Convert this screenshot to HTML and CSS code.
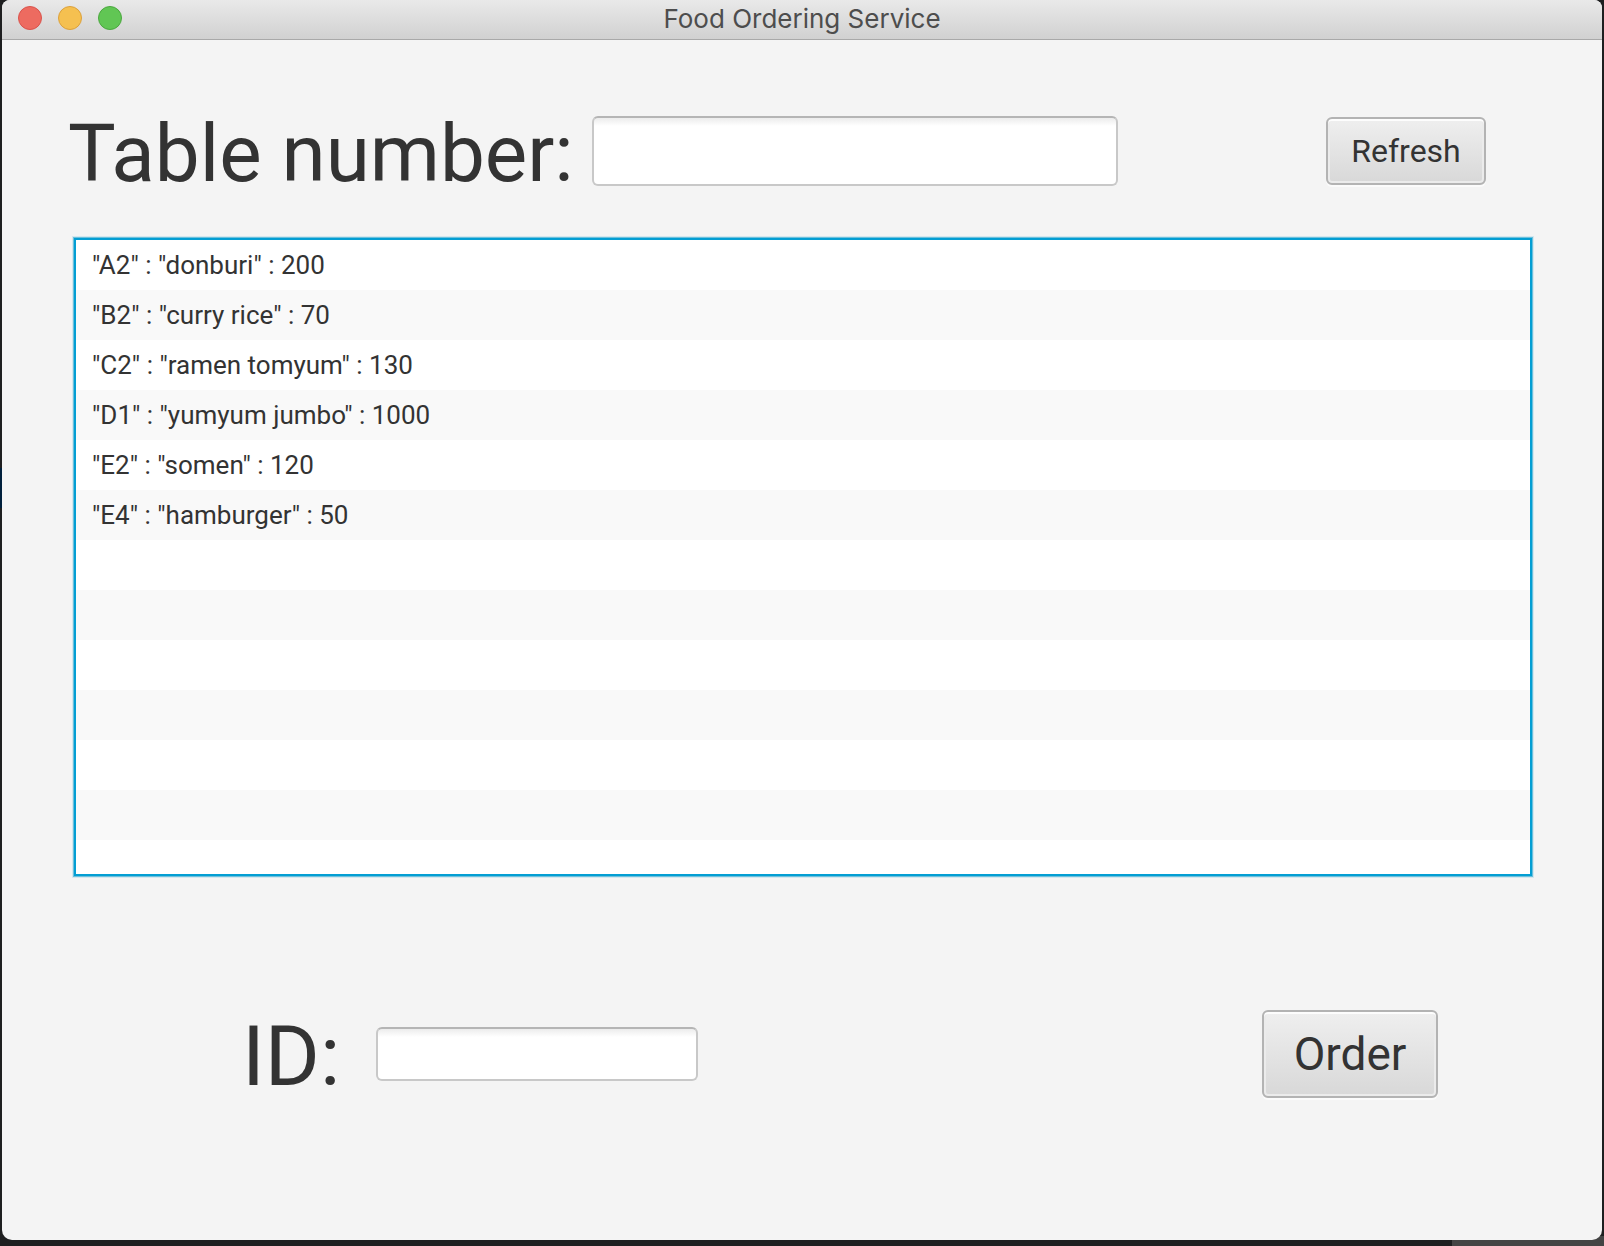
FILE: index.html
```html
<!DOCTYPE html>
<html lang="en">
<head>
<meta charset="utf-8">
<title>Food Ordering Service</title>
<link rel="stylesheet" href="styles.css">
</head>
<body>
<div class="window">
  <header class="titlebar">
    <div class="lights">
      <button class="light light-close" type="button" aria-label="Close"></button>
      <button class="light light-minimize" type="button" aria-label="Minimize"></button>
      <button class="light light-zoom" type="button" aria-label="Zoom"></button>
    </div>
    <h1 class="title">Food Ordering Service</h1>
  </header>
  <main class="content">
    <div class="row row-table">
      <label class="label" for="table-number">Table number:</label>
      <input class="field field-large" id="table-number" type="text">
      <button class="button button-refresh" type="button">Refresh</button>
    </div>
    <ul class="menu" tabindex="0">
      <li class="item">"A2" : "donburi" : 200</li>
      <li class="item">"B2" : "curry rice" : 70</li>
      <li class="item">"C2" : "ramen tomyum" : 130</li>
      <li class="item">"D1" : "yumyum jumbo" : 1000</li>
      <li class="item">"E2" : "somen" : 120</li>
      <li class="item">"E4" : "hamburger" : 50</li>
    </ul>
    <div class="row row-order">
      <label class="label label-id" for="item-id">ID:</label>
      <input class="field" id="item-id" type="text">
      <button class="button button-order" type="button">Order</button>
    </div>
  </main>
</div>
</body>
</html>
```
FILE: styles.css
```css
* {
  box-sizing: border-box;
}

/* desktop visible around the window edges */
body {
  margin: 0;
  min-height: 100vh;
  padding: 0 2px 6px;
  display: flex;
  background:
    linear-gradient(#444, #444) right bottom / 152px 10px no-repeat,
    linear-gradient(#00203c, #00203c) 0 468px / 2px 40px no-repeat,
    #1e1f20;
  color: #333;
  font-family: Roboto, "Liberation Sans", sans-serif;
}

.window {
  flex: 1;
  display: flex;
  flex-direction: column;
  overflow: hidden;
  border-radius: 8px 8px 10px 10px;
  background: #f4f4f4;
}

.titlebar {
  display: grid;
  grid-template-columns: 1fr auto 1fr;
  align-items: center;
  height: 40px;
  padding: 0 16px 3px;
  border-bottom: 1px solid #a9a9a9;
  background: linear-gradient(#e9e9e9, #d1d1d1);
}

.lights {
  display: flex;
  gap: 16px;
}

.light {
  width: 24px;
  height: 24px;
  padding: 0;
  border: 1px solid;
  border-radius: 50%;
}

.light-close {
  border-color: #d9534c;
  background: #ed6b60;
}

.light-minimize {
  border-color: #dba03c;
  background: #f5c050;
}

.light-zoom {
  border-color: #4ba73f;
  background: #61c654;
}

.title {
  margin: 0;
  padding-top: 2px;
  color: #4d4d4d;
  font-family: Inter, "Liberation Sans", sans-serif;
  font-size: 26px;
  font-weight: 400;
  line-height: 32px;
}

.content {
  flex: 1;
  display: flex;
  flex-direction: column;
  padding: 64px 0 139px;
}

.row {
  display: grid;
  align-items: center;
  height: 94px;
}

.row-table {
  grid-template-columns: 524px minmax(0, 526fr) 208fr 160px;
  padding: 0 116px 0 66px;
}

.row-order {
  grid-template-columns: 134px minmax(0, 322fr) 564fr 176px;
  padding: 0 164px 0 240px;
}

.label {
  padding-top: 6px;
  font-size: 80px;
  line-height: 88px;
  white-space: nowrap;
}

.label-id {
  font-size: 84px;
}

.field {
  width: 100%;
  height: 54px;
  padding: 0 14px;
  border: 2px solid #c8c8c8;
  border-top-color: #b5b5b5;
  border-radius: 6px;
  outline: none;
  background: linear-gradient(#ececec, #fff 8px);
  color: inherit;
  font: inherit;
  font-size: 26px;
}

.field-large {
  height: 70px;
}

.button {
  grid-column: 4;
  padding: 0;
  border: 2px solid #b3b3b3;
  border-radius: 6px;
  background: linear-gradient(#efefef, #d8d8d8);
  box-shadow: inset 0 2px #fdfdfd, inset 0 0 0 2px #ebebeb, 0 2px #fbfbfb;
  color: inherit;
  font: inherit;
}

.button-refresh {
  height: 68px;
  font-size: 32px;
}

.button-order {
  height: 88px;
  font-size: 46px;
}

.menu {
  flex: 1;
  margin: 40px 70px 131px 72px;
  padding: 0;
  overflow: hidden;
  border: 2px solid #039ed3;
  box-shadow: 0 0 0 1px #6cc0dc, 0 0 0 2px #d4e7ee;
  outline: none;
  background: repeating-linear-gradient(#fff 0 50px, #f9f9f9 50px 100px);
  list-style: none;
}

.item {
  height: 50px;
  padding: 0 16px;
  font-size: 26px;
  line-height: 50px;
}
```
